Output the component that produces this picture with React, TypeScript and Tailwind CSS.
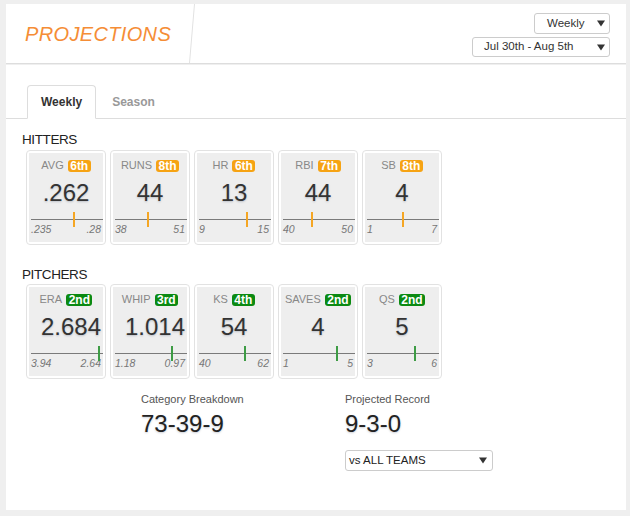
import React from "react";

type Stat = {
  label: string;
  rank: string;
  value: string;
  min: string;
  max: string;
  frac: number;
};

const hitters: Stat[] = [
  { label: "AVG", rank: "6th", value: ".262", min: ".235", max: ".28", frac: 0.6 },
  { label: "RUNS", rank: "8th", value: "44", min: "38", max: "51", frac: 0.46 },
  { label: "HR", rank: "6th", value: "13", min: "9", max: "15", frac: 0.667 },
  { label: "RBI", rank: "7th", value: "44", min: "40", max: "50", frac: 0.4 },
  { label: "SB", rank: "8th", value: "4", min: "1", max: "7", frac: 0.5 },
];

const pitchers: Stat[] = [
  { label: "ERA", rank: "2nd", value: "2.684", min: "3.94", max: "2.64", frac: 0.95 },
  { label: "WHIP", rank: "3rd", value: "1.014", min: "1.18", max: "0.97", frac: 0.785 },
  { label: "KS", rank: "4th", value: "54", min: "40", max: "62", frac: 0.636 },
  { label: "SAVES", rank: "2nd", value: "4", min: "1", max: "5", frac: 0.745 },
  { label: "QS", rank: "2nd", value: "5", min: "3", max: "6", frac: 0.665 },
];

function Arrow() {
  return (
    <svg width="8" height="7" viewBox="0 0 8 7" className="shrink-0">
      <polygon points="0,0.5 8,0.5 4,6.5" fill="#333" />
    </svg>
  );
}

function Card({ s, color }: { s: Stat; color: "orange" | "green" }) {
  const badge = color === "orange" ? "bg-[#f6a313]" : "bg-[#0b8a12]";
  const marker = color === "orange" ? "bg-[#f5a623]" : "bg-[#3e9c45]";
  return (
    <div className="w-[80px] h-[95px] border border-[#e2e2e2] rounded-[4px] p-[2px] bg-white">
      <div className="h-full bg-[#eeeeee] flex flex-col">
        <div className="mt-[6px] h-[13px] flex items-center justify-center gap-[4px]">
          <span className="text-[11px] leading-[13px] text-[#888]">{s.label}</span>
          <span
            className={`${badge} text-white font-bold text-[12px] leading-[12px] h-[12px] px-[2.5px] rounded-[3px]`}
          >
            {s.rank}
          </span>
        </div>
        <div className="mt-[7px] h-[28px] w-[50px] mx-auto text-center whitespace-nowrap text-[24px] leading-[28px] text-[#333] [text-shadow:0_1px_2px_rgba(40,60,90,0.25)]">
          {s.value}
        </div>
        <div className="relative flex flex-col">
          <div className="mt-[12px] ml-[2px] h-px bg-[#7a7a7a]" />
          <div className="mt-[3px] px-[2px] flex justify-between text-[10.5px] leading-[12px] italic text-[#777]">
            <span>{s.min}</span>
            <span>{s.max}</span>
          </div>
          <div
            className={`absolute top-[5px] h-[15px] w-[2px] ${marker}`}
            style={{ left: `${2 + s.frac * 72 - 1}px` }}
          />
        </div>
      </div>
    </div>
  );
}

export default function App() {
  return (
    <div className="w-[630px] h-[516px] bg-[#efefef] pt-[4px] font-['Liberation_Sans',Arial,sans-serif]">
      <div className="ml-[6px] w-[620px]">
        {/* Header */}
        <div className="h-[60px] bg-white border-b border-[#dddddd] flex">
          <div className="w-[183px] pl-[19px] flex items-center">
            <span className="text-[20px] italic tracking-[0.35px] text-[#f58d36]">PROJECTIONS</span>
          </div>
          <svg width="6" height="59" viewBox="0 0 6 59" className="shrink-0">
            <line x1="5.5" y1="0" x2="0.5" y2="59" stroke="#e2e2e2" strokeWidth="1" />
          </svg>
          <div className="flex-1" />
          <div className="pr-[16px] pt-[9px] flex flex-col items-end gap-[3px]">
            <div className="w-[76px] h-[21px] border border-[#cccccc] rounded-[3px] flex items-center pl-[12px] pr-[4px] justify-between">
              <span className="text-[11.5px] text-[#333]">Weekly</span>
              <Arrow />
            </div>
            <div className="w-[138px] h-[20px] border border-[#cccccc] rounded-[3px] flex items-center pl-[11px] pr-[4px] justify-between">
              <span className="text-[11.5px] text-[#333]">Jul 30th - Aug 5th</span>
              <Arrow />
            </div>
          </div>
        </div>

        {/* Body */}
        <div className="mt-[1px] h-[445px] bg-white">
          <div className="h-[54px] border-b border-[#dddddd] flex items-end pl-[21px]">
            <div className="-mb-px h-[34px] border border-[#dddddd] border-b-white rounded-t-[4px] bg-white px-[13px] flex items-center text-[12px] font-bold text-[#333] mr-[2px]">
              Weekly
            </div>
            <div className="h-[33px] px-[14px] flex items-center text-[12px] font-bold text-[#999]">
              Season
            </div>
          </div>

          <div className="pl-[16px] mt-[13px] h-[16px] text-[13.5px] leading-[16px] tracking-[-0.4px] text-[#222]">
            HITTERS
          </div>
          <div className="mt-[2px] pl-[20px] flex gap-[4px]">
            {hitters.map((s) => (
              <Card key={s.label} s={s} color="orange" />
            ))}
          </div>

          <div className="pl-[16px] mt-[22px] h-[16px] text-[13.5px] leading-[16px] tracking-[-0.4px] text-[#222]">
            PITCHERS
          </div>
          <div className="mt-[1px] pl-[20px] flex gap-[4px]">
            {pitchers.map((s) => (
              <Card key={s.label} s={s} color="green" />
            ))}
          </div>

          <div className="mt-[14px] pl-[135px] flex">
            <div className="w-[204px] flex flex-col">
              <div className="text-[11px] leading-[13px] text-[#555]">Category Breakdown</div>
              <div className="mt-[4px] text-[24px] leading-[28px] text-[#222] [text-shadow:0_1px_2px_rgba(40,60,90,0.25)]">
                73-39-9
              </div>
            </div>
            <div className="flex flex-col">
              <div className="text-[11px] leading-[13px] text-[#555]">Projected Record</div>
              <div className="mt-[4px] text-[24px] leading-[28px] text-[#222] [text-shadow:0_1px_2px_rgba(40,60,90,0.25)]">
                9-3-0
              </div>
              <div className="mt-[12px] w-[148px] h-[21px] border border-[#cccccc] rounded-[3px] flex items-center pl-[3px] pr-[5px] justify-between">
                <span className="text-[11.5px] text-[#222]">vs ALL TEAMS</span>
                <Arrow />
              </div>
            </div>
          </div>
        </div>
      </div>
    </div>
  );
}
